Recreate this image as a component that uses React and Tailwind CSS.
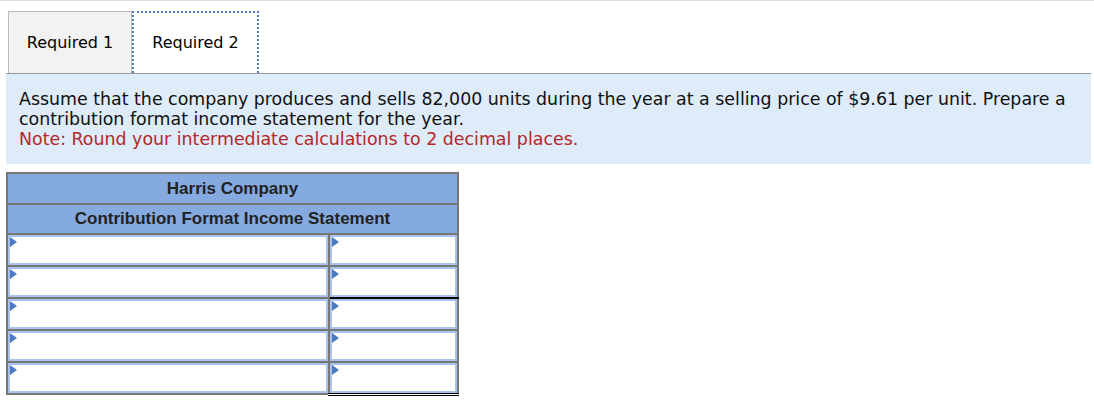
import React from 'react'

const verdana = { fontFamily: '"DejaVu Sans", Verdana, sans-serif' }

const Marker = () => (
  <span className="absolute left-0 top-0 w-0 h-0 border-t-[5px] border-b-[5px] border-l-[7px] border-t-transparent border-b-transparent border-l-[#4a7ac4]" />
)

const InputCell = ({ line }) => (
  <td className={`p-0 h-[32px] border-2 border-[#777] ${line || ''}`}>
    <div className="relative h-full border-2 border-[#a9c3ea] bg-white">
      <Marker />
    </div>
  </td>
)

const rows = [
  { right: '' },
  { right: 'border-b-black' },
  { right: '' },
  { right: 'border-b-black' },
  { right: 'border-b-[3px] border-b-black border-double' },
]

export default function App() {
  return (
    <div className="w-[1094px] h-[408px] bg-white border-t border-[#ddd]">
      <div className="pl-[8px] pt-[10px] flex" style={verdana}>
        <div className="w-[124px] h-[62px] bg-[#f2f2f2] border border-b-0 border-[#bbb] flex items-center justify-center text-[16px] text-black">
          Required 1
        </div>
        <div className="w-[127px] h-[62px] bg-white border-2 border-b-0 border-dotted border-[#4a7ac4] flex items-center justify-center text-[16px] text-black">
          Required 2
        </div>
      </div>
      <div className="ml-[6px] w-[1085px] border-t border-[#999] bg-[#deebf8] px-[13px] pt-[15px] pb-[15px] text-[17.4px] leading-[20px] text-[#111]" style={verdana}>
        <p>
          Assume that the company produces and sells 82,000 units during the year at a selling price of $9.61 per unit. Prepare a contribution format income statement for the year.
        </p>
        <p className="text-[#b3282a]">Note: Round your intermediate calculations to 2 decimal places.</p>
      </div>
      <table
        className="ml-[6px] mt-[8px] w-[453px] border-collapse border-2 border-[#777]"
        style={{ fontFamily: '"Liberation Sans", Arial, sans-serif' }}
      >
        <tbody>
          <tr>
            <td colSpan={2} className="h-[31px] bg-[#84aae0] border-2 border-[#777] text-center font-bold text-[17px] text-[#222]">
              Harris Company
            </td>
          </tr>
          <tr>
            <td colSpan={2} className="h-[30px] bg-[#84aae0] border-2 border-[#777] text-center font-bold text-[17px] text-[#222]">
              Contribution Format Income Statement
            </td>
          </tr>
          {rows.map((r, i) => (
            <tr key={i}>
              <td className="p-0 h-[32px] w-[322px] border-2 border-[#777]">
                <div className="relative h-full border-2 border-[#a9c3ea] bg-white">
                  <Marker />
                </div>
              </td>
              <InputCell line={r.right} />
            </tr>
          ))}
        </tbody>
      </table>
    </div>
  )
}
